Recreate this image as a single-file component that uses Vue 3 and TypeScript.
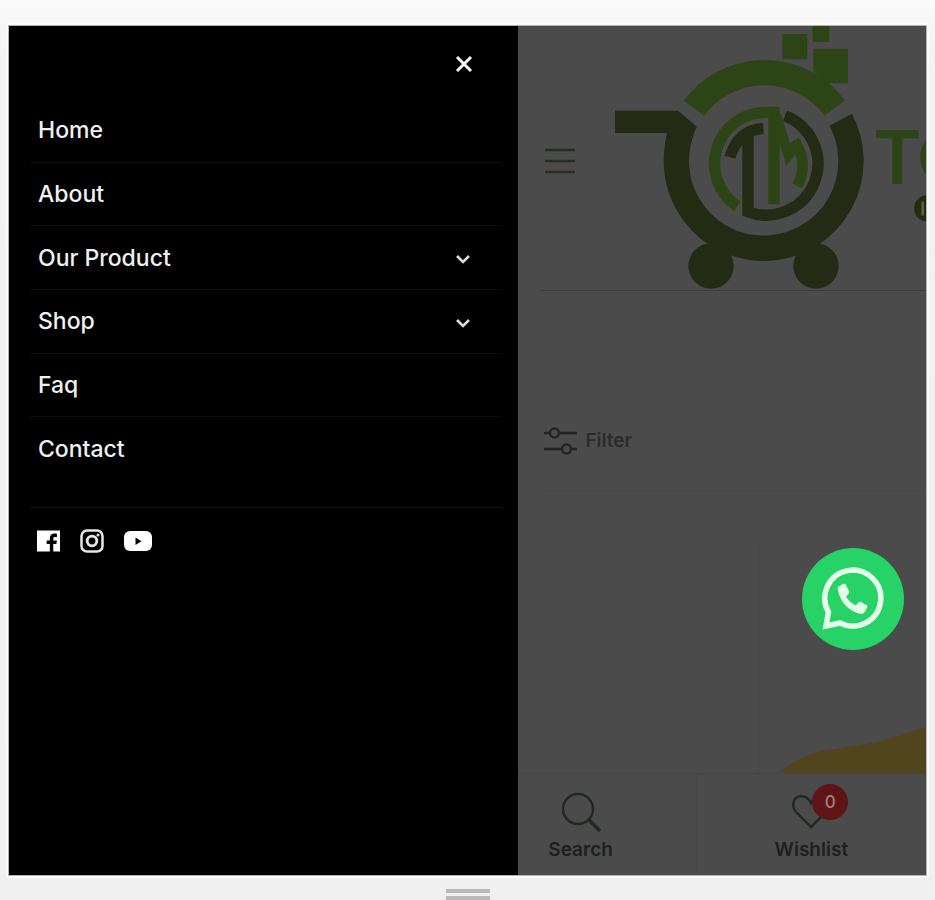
<script setup lang="ts">
import { ref } from 'vue'

interface MenuItem {
  label: string
  children?: boolean
}

const menu: MenuItem[] = [
  { label: 'Home' },
  { label: 'About' },
  { label: 'Our Product', children: true },
  { label: 'Shop', children: true },
  { label: 'Faq' },
  { label: 'Contact' },
]

const wishlistCount = ref<number>(0)
</script>

<template>
  <div class="stage">
    <div class="device">
      <aside class="drawer">
        <div class="drawer-top">
          <button class="close" type="button" aria-label="Close menu">
            <svg width="18" height="18" viewBox="0 0 18 18">
              <path d="M2 2 16 16M16 2 2 16" fill="none" stroke="#f4f4f4" stroke-width="3" />
            </svg>
          </button>
        </div>
        <nav aria-label="Main menu">
          <ul class="menu">
            <li v-for="item in menu" :key="item.label">
              <a href="#">{{ item.label }}</a>
              <button v-if="item.children" class="expand" type="button" :aria-label="'Expand ' + item.label">
                <svg width="14" height="9" viewBox="0 0 14 9">
                  <path d="M1 1 7 7 13 1" fill="none" stroke="#dcdcdc" stroke-width="2.600" />
                </svg>
              </button>
            </li>
          </ul>
        </nav>
        <div class="social">
          <a href="#" aria-label="Facebook">
            <svg width="23" height="24" viewBox="0 0 24 24">
              <path fill="#fff" d="M0 1h24v22h-7v-8h3.200l.6-3.600H17V9.500c0-1.200.6-1.800 1.900-1.800h1.900V4.500c-.8-.1-1.600-.2-2.500-.2-3.100 0-4.900 1.700-4.900 4.800v2.300h-3.300V15h3.300v8H0z" />
            </svg>
          </a>
          <a href="#" aria-label="Instagram">
            <svg width="24" height="24" viewBox="0 0 24 24" fill="none" stroke="#e8e8e8">
              <rect x="1.500" y="1.500" width="21" height="21" rx="5.500" stroke-width="2.500" />
              <circle cx="12" cy="12" r="4.800" stroke-width="2.800" />
              <circle cx="18" cy="6" r="1.500" fill="#e8e8e8" stroke="none" />
            </svg>
          </a>
          <a href="#" aria-label="YouTube">
            <svg width="28" height="22" viewBox="0 0 28 22">
              <rect x="0" y="1" width="28" height="20" rx="6" fill="#fff" />
              <path d="M11.500 7.500v7.500l6-3.800z" fill="#000" />
            </svg>
          </a>
        </div>
      </aside>

      <main class="store">
        <header class="top">
          <button class="burger" type="button" aria-label="Open menu">
            <svg width="32" height="26" viewBox="0 0 32 26">
              <path d="M1 2h30M1 13h30M1 24h30" stroke="#253025" stroke-width="2.400" />
            </svg>
          </button>
          <a class="logo" href="#" aria-label="Store home">
            <svg width="312" height="264" viewBox="42 18 936 792">
              <g fill="#2c4416">
                <rect x="547" y="42" width="75" height="76" />
                <rect x="638" y="18" width="50" height="48" />
                <path d="M640 86h104v104h-58L640 155z" />
              </g>
              <path d="M282 265A262 262 0 0 1 704 264" fill="none" stroke="#2c4416" stroke-width="76" />
              <path d="M722 299A262 262 0 1 1 246 330" fill="none" stroke="#232b15" stroke-width="76" />
              <path d="M45 272H235L290 320 270 370 194 400 200 339H45z" fill="#232b15" />
              <circle cx="333" cy="738" r="68" fill="#232b15" />
              <circle cx="648" cy="738" r="68" fill="#232b15" />
              <g fill="none" stroke-width="34">
                <path d="M412 559A154 154 0 0 1 497 277H522V553" stroke="#2c4416" />
                <path d="M555 287A154 154 0 1 1 444 575V335" stroke="#232b15" />
                <path d="M390 412Q413 330 490 325" stroke="#232b15" />
                <path d="M528 285 565 405 593 368" stroke="#2c4416" stroke-width="30" />
                <path d="M583 362Q628 430 592 498" stroke="#2c4416" stroke-width="32" />
              </g>
              <text x="825" y="492" class="wordmark">TO</text>
              <circle cx="982" cy="565" r="40" fill="#232b15" />
              <path d="M968 545v42" stroke="#566047" stroke-width="8" />
            </svg>
          </a>
        </header>

        <div class="toolbar">
          <button class="filter" type="button">
            <svg width="34" height="28" viewBox="0 0 34 28" fill="none" stroke="#232323" stroke-width="2.400">
              <path d="M0 6h6M15 6h18M0 22h18M27 22h6" />
              <circle cx="10.500" cy="6" r="4.500" />
              <circle cx="22.500" cy="22" r="4.500" />
            </svg>
            <span>Filter</span>
          </button>
        </div>

        <section class="products" aria-label="Products">
          <div class="card">
            <svg class="photo" width="148" height="46" viewBox="0 0 148 46" preserveAspectRatio="none">
              <path d="M0 46Q25 27 45 24L100 15 148 0V46z" fill="#51451e" />
            </svg>
          </div>
        </section>

        <nav class="tabs" aria-label="Shortcuts">
          <a href="#">
            <svg width="42" height="42" viewBox="0 0 42 42" fill="none" stroke="#202820">
              <circle cx="18" cy="18" r="15" stroke-width="2.400" />
              <path d="M28 28 40 40" stroke-width="3.200" />
            </svg>
            <span>Search</span>
          </a>
          <a href="#">
            <span class="heart">
              <svg width="42" height="42" viewBox="0 0 42 42" fill="none" stroke="#202820" stroke-width="2.400">
                <path d="M21 36 6 21C1 15 3 6 11 5c5 0 8 3 10 7 2-4 5-7 10-7 8 1 10 10 5 16z" />
              </svg>
              <b class="count">{{ wishlistCount }}</b>
            </span>
            <span>Wishlist</span>
          </a>
        </nav>
      </main>

      <a class="whatsapp" href="#" aria-label="Chat on WhatsApp">
        <svg width="66" height="66" viewBox="0 0 66 66">
          <path d="M6 60 8.500 46A28 28 0 1 1 20 57z" fill="none" stroke="#e4ffe9" stroke-width="5.500" />
          <path d="M18 21 23 18Q25 17 26 19L29 25Q30 27 26 30.500 29 36 36 39.500 39 35 41 36L47 39.500Q48 40 47 42L44 47Q42 48.500 37 47 22 41 18 25 17.500 22 18 21z" fill="#e4ffe9" />
        </svg>
      </a>
    </div>
    <div class="grip"></div>
  </div>
</template>

<style>
body {
  margin: 0;
}
</style>

<style scoped>
.stage {
  box-sizing: border-box;
  min-height: 100vh;
  display: flex;
  flex-direction: column;
  padding: 26px 9px 0;
  background: linear-gradient(#fafafa, #f2f2f2 60px, #f0f0f0);
  font-family: Inter, "Liberation Sans", sans-serif;
  overflow: hidden;
}

.device {
  position: relative;
  flex: 1;
  display: grid;
  grid-template-columns: 5fr 4fr;
  box-shadow: 0 0 0 1px #b4b4b4, 0 0 0 3px #fbfbfb;
}

button {
  padding: 0;
  border: 0;
  background: none;
  font: inherit;
  color: inherit;
}

a {
  color: inherit;
  text-decoration: none;
}

svg {
  display: block;
}

.drawer {
  background: #000;
  color: #f0f0f0;
  padding: 0 16px 0 21px;
}

.drawer-top {
  height: 73px;
  display: flex;
  align-items: center;
  justify-content: flex-end;
  padding: 2px 29px 0 0;
  box-sizing: border-box;
}

.menu {
  list-style: none;
  margin: 0;
  padding: 0;
  height: 382px;
  display: grid;
  grid-auto-rows: 1fr;
}

.menu li {
  display: flex;
  align-items: center;
  justify-content: space-between;
  padding: 0 32px 0 8px;
  border-bottom: 1px solid #0e0e0e;
  font-size: 23px;
  font-weight: 500;
  line-height: 32px;
}

.menu li:last-child {
  border-bottom: 0;
}

.expand {
  padding-top: 4px;
}

.social {
  display: flex;
  align-items: center;
  gap: 20px;
  margin-top: 26px;
  padding: 21px 7px;
  border-top: 1px solid #121212;
}

.store {
  min-width: 0;
  display: flex;
  flex-direction: column;
  overflow: hidden;
  background: #4b4b4b;
  color: #202020;
}

.top {
  height: 264px;
  display: flex;
  align-items: center;
  gap: 38px;
  margin-left: 22px;
  padding-left: 4px;
  border-bottom: 1px solid #3c3c3c;
}

.burger {
  padding-top: 6px;
}

.logo {
  flex: none;
}

.wordmark {
  font-family: Lato, "Liberation Sans", sans-serif;
  font-weight: 700;
  font-size: 222px;
  fill: #2c4416;
}

.toolbar {
  height: 200px;
  box-sizing: border-box;
  margin-left: 26px;
  padding-top: 100px;
  display: flex;
  align-items: center;
  border-bottom: 1px solid #484848;
}

.filter {
  display: flex;
  align-items: center;
  gap: 7px;
  font-size: 19px;
  font-weight: 600;
  color: #2b2b2b;
}

.products {
  flex: 1;
  display: flex;
  justify-content: flex-end;
  padding-top: 54px;
}

.card {
  flex: 0 0 41%;
  display: flex;
  align-items: flex-end;
  justify-content: flex-end;
  border-left: 1px solid #464646;
  border-top: 1px solid #494949;
}

.tabs {
  height: 101px;
  margin-left: -53px;
  display: grid;
  grid-template-columns: 1fr 1fr;
  border-top: 1px solid #444;
}

.tabs > a {
  display: flex;
  flex-direction: column;
  align-items: center;
  gap: 4px;
  padding-top: 17px;
  font-size: 19px;
  line-height: 26px;
  font-weight: 600;
  color: #1c201c;
}

.tabs > a + a {
  border-left: 1px solid #474747;
}

.heart {
  position: relative;
}

.count {
  position: absolute;
  left: 22px;
  top: -7px;
  width: 36px;
  height: 36px;
  border-radius: 50%;
  background: #5f1416;
  color: #a38080;
  font-size: 17px;
  font-weight: 500;
  line-height: 36px;
  text-align: center;
}

.whatsapp {
  position: absolute;
  right: 22px;
  bottom: 225px;
  width: 102px;
  height: 102px;
  border-radius: 50%;
  background: #27d366;
  display: flex;
  align-items: center;
  justify-content: center;
}

.grip {
  flex: none;
  align-self: center;
  box-sizing: border-box;
  width: 44px;
  height: 11px;
  margin-top: 14px;
  border-top: 4px solid #b9b9b9;
  border-bottom: 4px solid #b9b9b9;
}
</style>
